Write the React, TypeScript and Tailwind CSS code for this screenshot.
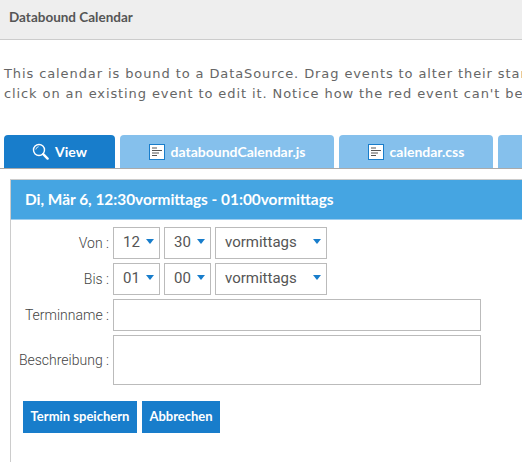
import React from 'react';

function FileIcon() {
  return (
    <svg width="16" height="16" viewBox="0 0 16 16" className="shrink-0">
      <rect x="0.5" y="0.5" width="15" height="15" fill="#fff" stroke="#187dcb" />
      <path d="M3 4h5M3 6.5h10M3 9h7M3 11.5h5" stroke="#555" strokeWidth="1" fill="none" />
    </svg>
  );
}

function LensIcon() {
  return (
    <svg width="17" height="17" viewBox="0 0 17 17" className="shrink-0">
      <circle cx="7" cy="7" r="5.5" fill="none" stroke="#fff" strokeWidth="1.4" />
      <path d="M3.8 6.5a3.4 3.4 0 0 1 2.8-2.8" fill="none" stroke="#fff" strokeWidth="0.8" />
      <path d="M11.2 11.2l4.4 4.4" stroke="#fff" strokeWidth="2.4" strokeLinecap="round" />
    </svg>
  );
}

function Tab({ label, className, active }: { label: string; className: string; active?: boolean }) {
  return (
    <div
      className={`flex h-[33px] shrink-0 items-center justify-center gap-[6px] rounded-t-[4px] text-[14px] font-bold text-white ${
        active ? 'bg-[#187dcb]' : 'bg-[#85c0ec]'
      } ${className}`}
    >
      {active ? <LensIcon /> : <FileIcon />}
      {label && <span>{label}</span>}
    </div>
  );
}

function Drop({ value, className }: { value: string; className: string }) {
  return (
    <div className={`flex h-[32px] items-center justify-between border border-[#bbb] pb-[1px] pl-[9px] pr-[5px] text-[15px] text-[#555] ${className}`}>
      <span>{value}</span>
      <span className="mb-[2px] h-0 w-0 border-x-[4.5px] border-t-[5px] border-x-transparent border-t-[#187dcb]" />
    </div>
  );
}

function Row({ label, children }: { label: string; children: React.ReactNode }) {
  return (
    <div className="flex items-center gap-[4px]">
      <label className="w-[98px] text-right text-[14px] font-light text-[#444]">{label}</label>
      {children}
    </div>
  );
}

function TimeRow({ label, hour, minute }: { label: string; hour: string; minute: string }) {
  return (
    <Row label={label}>
      <div className="flex gap-[4px]">
        <Drop value={hour} className="w-[47px]" />
        <Drop value={minute} className="w-[47px]" />
        <Drop value="vormittags" className="w-[112px]" />
      </div>
    </Row>
  );
}

export default function App() {
  return (
    <div className="h-[462px] w-[522px] overflow-hidden bg-white font-['Lato',sans-serif]">
      <div className="flex h-[40px] items-center border-b border-[#ccc] bg-[#eee] pb-[5px] pl-[9px] text-[13.5px] font-bold text-[#555]">
        Databound Calendar
      </div>

      <p className="mt-[24px] whitespace-nowrap pl-[4px] font-['DejaVu_Sans',sans-serif] text-[13px] leading-[20px] tracking-[0.9px] text-[#666]">
        This calendar is bound to a DataSource. Drag events to alter their start
        <br />
        click on an existing event to edit it. Notice how the red event can't be
      </p>

      <div className="mt-[31px] flex h-[34px] gap-[5px] border-b border-[#aaa] pl-[4px]">
        <Tab label="View" active className="w-[111px]" />
        <Tab label="databoundCalendar.js" className="w-[214px]" />
        <Tab label="calendar.css" className="w-[154px]" />
        <Tab label="" className="w-[120px]" />
      </div>

      <div className="ml-[10px] mt-[10px] h-[300px] w-[560px] border-l border-t border-[#ccc] font-['Roboto',sans-serif]">
        <div className="flex h-[40px] items-center border-b border-[#9dcdee] bg-[#45a5e2] pl-[14px] font-['Lato',sans-serif] text-[15.4px] font-bold text-white">
          Di, Mär 6, 12:30vormittags - 01:00vormittags
        </div>

        <div className="flex flex-col gap-[4px] pt-[7px]">
          <TimeRow label="Von :" hour="12" minute="30" />
          <TimeRow label="Bis :" hour="01" minute="00" />
          <Row label="Terminname :">
            <div className="h-[32px] w-[368px] border border-[#bbb]" />
          </Row>
          <Row label="Beschreibung :">
            <div className="h-[50px] w-[368px] border border-[#bbb]" />
          </Row>
        </div>

        <div className="ml-[12px] mt-[16px] flex gap-[5px] font-['Lato',sans-serif] text-[13px] font-bold text-white">
          <button className="h-[32px] w-[114px] bg-[#187dcb]">Termin speichern</button>
          <button className="h-[32px] w-[78px] bg-[#187dcb]">Abbrechen</button>
        </div>
      </div>
    </div>
  );
}
